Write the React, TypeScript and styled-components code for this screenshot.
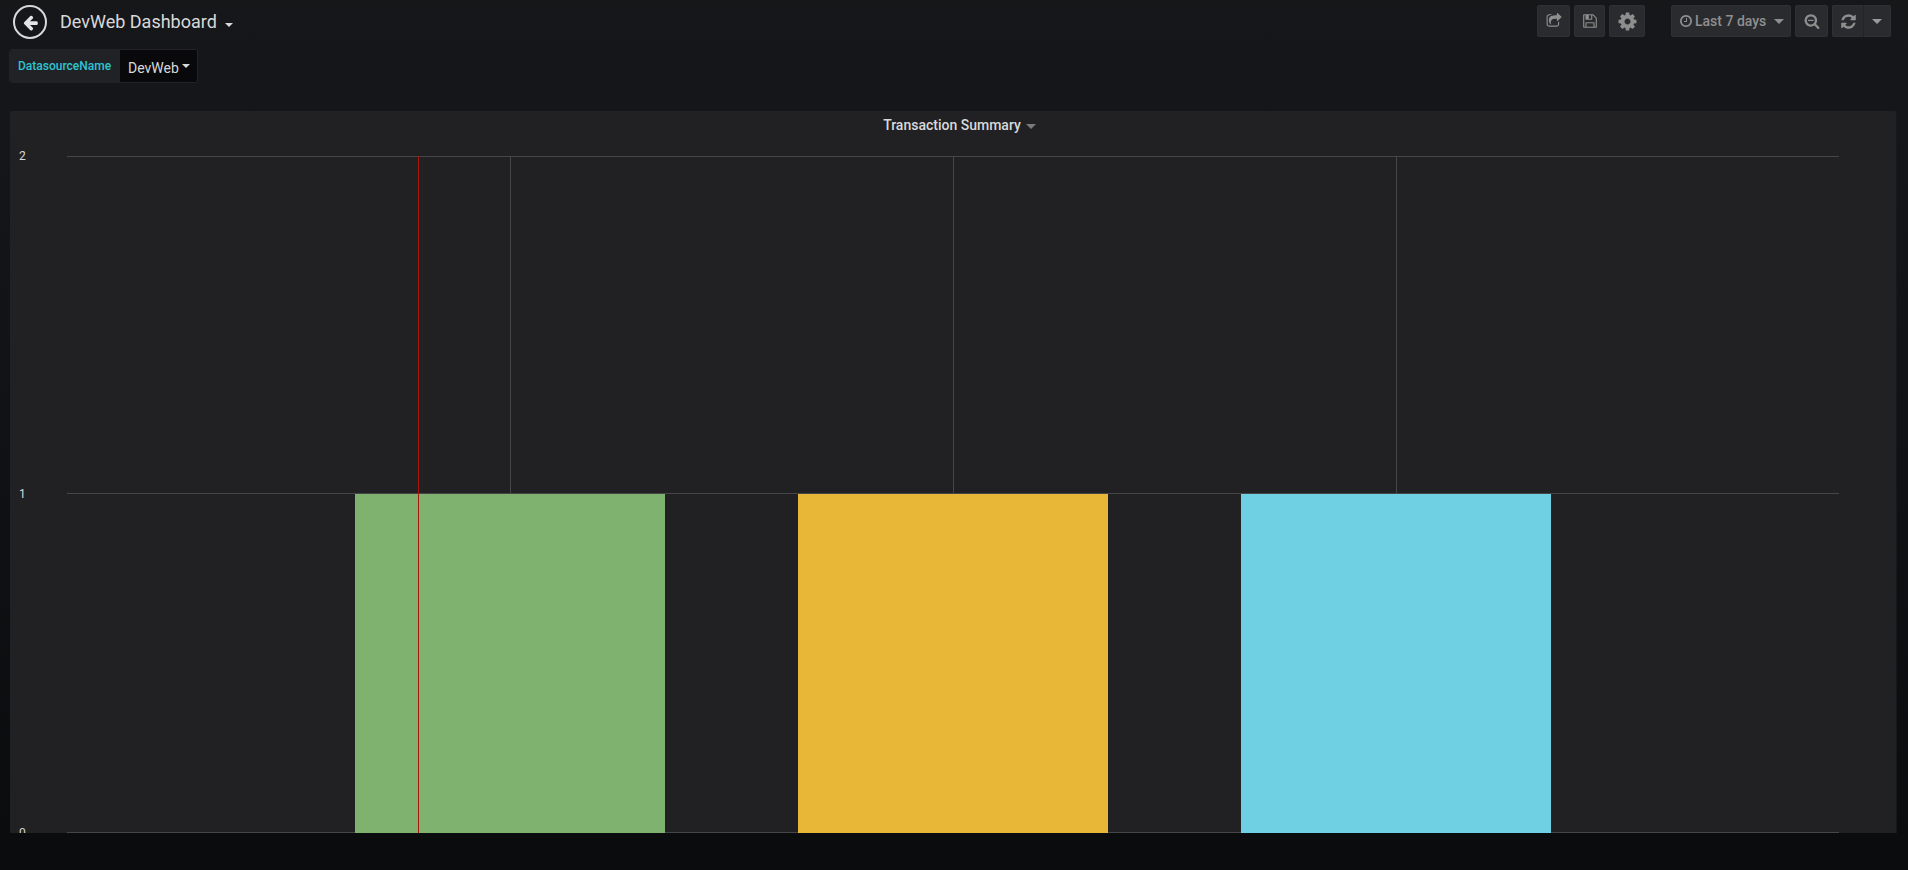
import React from "react";
import styled, { createGlobalStyle } from "styled-components";

const Global = createGlobalStyle`
  html, body { margin: 0; padding: 0; height: 100%; overflow: hidden; background: #0b0c0e; }
  body { font-family: Roboto, "Liberation Sans", sans-serif; }
`;

const ICONS = {
  back: "M1664 896v128q0 53-32.5 90.5t-84.5 37.5h-704l293 294q38 36 38 90t-38 90l-75 76q-37 37-90 37-52 0-91-37l-651-652q-37-37-37-90 0-52 37-91l651-650q38-38 91-38 52 0 90 38l75 74q38 38 38 91t-38 91l-293 293h704q52 0 84.500 37.500t32.500 90.500z",
  share: "M1472 989v259q0 119-84.500 203.500t-203.500 84.500h-832q-119 0-203.500-84.500t-84.500-203.500v-832q0-119 84.500-203.500t203.500-84.500h255q13 0 22.500 9.500t9.500 22.500q0 27-26 32-77 26-133 60-10 4-16 4h-112q-66 0-113 47t-47 113v832q0 66 47 113t113 47h832q66 0 113-47t47-113v-214q0-19 18-29 28-13 54-37 16-16 35-8 21 9 21 29zm237-496l-384 384q-18 19-45 19-12 0-25-5-39-17-39-59v-192h-160q-323 0-438 131-119 137-74 473 3 23-20 34-8 2-12 2-16 0-26-13-10-14-21-31t-39.500-68.500-49.500-99-38.500-114-17.500-122.500q0-49 3.500-91t14-90 28-88 47-81.500 68.500-74 94.500-61.500 124.500-48.500 159.500-30.500 196.500-11h160v-192q0-42 39-59 13-5 25-5 26 0 45 19l384 384q19 19 19 45t-19 45z",
  save: "M512 1536h768v-384h-768v384zm896 0h128v-896q0-14-10-38.500t-20-34.500l-281-281q-10-10-34-20t-39-10v416q0 40-28 68t-68 28h-576q-40 0-68-28t-28-68v-416h-128v1280h128v-416q0-40 28-68t68-28h832q40 0 68 28t28 68v416zm-384-928v-320q0-13-9.500-22.500t-22.500-9.500h-192q-13 0-22.500 9.500t-9.500 22.500v320q0 13 9.500 22.500t22.500 9.500h192q13 0 22.500-9.500t9.500-22.500zm640 32v928q0 40-28 68t-68 28h-1344q-40 0-68-28t-28-68v-1344q0-40 28-68t68-28h928q40 0 88 20t76 48l280 280q28 28 48 76t20 88z",
  cog: "M1152 896q0-106-75-181t-181-75-181 75-75 181 75 181 181 75 181-75 75-181zm512-109v222q0 12-8 23t-20 13l-185 28q-19 54-39 91 35 50 107 138 10 12 10 25t-9 23q-27 37-99 108t-94 71q-12 0-26-9l-138-108q-44 23-91 38-16 136-29 186-7 28-36 28h-222q-14 0-24.500-8.500t-11.500-21.500l-28-184q-49-16-90-37l-141 107q-10 9-25 9-14 0-25-11-126-114-165-168-7-10-7-23 0-12 8-23 15-21 51-66.500t54-70.500q-27-50-41-99l-183-27q-13-2-21-12.500t-8-23.500v-222q0-12 8-23t19-13l186-28q14-46 39-92-40-57-107-138-10-12-10-24 0-10 9-23 26-36 98.500-107.500t94.500-71.500q13 0 26 10l138 107q44-23 91-38 16-136 29-186 7-28 36-28h222q14 0 24.500 8.500t11.500 21.500l28 184q49 16 90 37l142-107q9-9 24-9 13 0 25 10 129 119 165 170 7 8 7 22 0 12-8 23-15 21-51 66.500t-54 70.500q26 50 41 98l183 28q13 2 21 12.500t8 23.500z",
  clock: "M1024 544v448q0 14-9 23t-23 9h-320q-14 0-23-9t-9-23v-64q0-14 9-23t23-9h224v-352q0-14 9-23t23-9h64q14 0 23 9t9 23zm416 352q0-148-73-273t-198-198-273-73-273 73-198 198-73 273 73 273 198 198 273 73 273-73 198-198 73-273zm224 0q0 209-103 385.500t-279.500 279.500-385.500 103-385.500-103-279.500-279.500-103-385.500 103-385.500 279.500-279.500 385.500-103 385.500 103 279.500 279.500 103 385.500z",
  zoom: "M1088 800v64q0 13-9.500 22.500t-22.500 9.500h-576q-13 0-22.500-9.500t-9.500-22.500v-64q0-13 9.500-22.500t22.500-9.500h576q13 0 22.500 9.500t9.500 22.500zm128 32q0-185-131.500-316.500t-316.500-131.500-316.500 131.500-131.500 316.500 131.500 316.500 316.500 131.500 316.500-131.500 131.500-316.500zm512 832q0 53-37.500 90.500t-90.500 37.500q-54 0-90-38l-343-342q-179 124-399 124-143 0-273.500-55.500t-225-150-150-225-55.500-273.500 55.500-273.500 150-225 225-150 273.500-55.500 273.500 55.500 225 150 150 225 55.500 273.500q0 220-124 399l343 343q37 37 37 90z",
  sync: "M1639 1056q0 5-1 7-64 268-268 434.500t-478 166.500q-146 0-282.500-55t-243.500-157l-129 129q-19 19-45 19t-45-19-19-45v-448q0-26 19-45t45-19h448q26 0 45 19t19 45-19 45l-137 137q71 66 161 102t187 36q134 0 250-65t186-179q11-17 53-117 8-23 30-23h192q13 0 22.500 9.500t9.500 22.500zm25-800v448q0 26-19 45t-45 19h-448q-26 0-45-19t-19-45 19-45l138-138q-148-137-349-137-134 0-250 65t-186 179q-11 17-53 117-8 23-30 23h-199q-13 0-22.500-9.500t-9.500-22.500v-7q65-268 270-434.500t480-166.500q146 0 284 55.500t245 156.500l130-129q19-19 45-19t45 19 19 45z",
};

const Glyph = styled.svg<{ $size: number }>`
  display: block;
  width: ${(p) => p.$size}px;
  height: ${(p) => p.$size}px;
  fill: currentColor;
`;

function Icon({ name, size }: { name: keyof typeof ICONS; size: number }) {
  return (
    <Glyph viewBox="0 0 1792 1792" $size={size}>
      <path d={ICONS[name]} />
    </Glyph>
  );
}

const Page = styled.div`
  width: 1908px;
  height: 870px;
  background: linear-gradient(180deg, #161719 0px, #141619 120px, #0b0c0e 830px);
  overflow: hidden;
`;

const Navbar = styled.header`
  height: 43px;
  display: flex;
  align-items: flex-start;
  justify-content: space-between;
  padding: 5px 17px 0 13px;
  box-sizing: border-box;
`;

const TitleGroup = styled.div`
  display: flex;
  align-items: center;
  height: 34px;
`;

const BackButton = styled.div`
  width: 34px;
  height: 34px;
  box-sizing: border-box;
  border: 2px solid #d8d9da;
  border-radius: 50%;
  display: flex;
  align-items: center;
  justify-content: center;
  color: #e3e4e5;
`;

const Title = styled.span`
  margin-left: 13px;
  font-size: 18px;
  color: #d8d9da;
  line-height: 34px;
`;

const Caret = styled.span<{ $size?: number; $color?: string }>`
  display: inline-block;
  width: 0;
  height: 0;
  border-left: ${(p) => p.$size ?? 4}px solid transparent;
  border-right: ${(p) => p.$size ?? 4}px solid transparent;
  border-top: ${(p) => p.$size ?? 4}px solid ${(p) => p.$color ?? "#d8d9da"};
`;

const TitleCaret = styled(Caret)`
  margin-left: 8px;
  margin-top: 5px;
`;

const Tools = styled.div`
  display: flex;
  align-items: flex-start;
`;

const ToolButton = styled.div<{ $w: number; $ml?: number }>`
  width: ${(p) => p.$w}px;
  margin-left: ${(p) => p.$ml ?? 4}px;
  height: 32px;
  box-sizing: border-box;
  background: #2a2b2e;
  border: 1px solid #2f3033;
  border-radius: 2px;
  display: flex;
  align-items: center;
  justify-content: center;
  color: #8e8e8e;
`;

const TimeButton = styled(ToolButton)`
  justify-content: flex-start;
  padding-left: 7px;
`;

const TimeLabel = styled.span`
  font-size: 14px;
  font-weight: 500;
  margin-left: 2px;
  margin-top: -1px;
  color: #8f8f8f;
`;

const TimeCaret = styled(Caret)`
  margin-left: 8px;
`;

const RefreshGroup = styled.div`
  display: flex;
  margin-left: 4px;
`;

const RefreshPart = styled(ToolButton)`
  margin-left: 0;
  border-radius: 2px 0 0 2px;
  border-right: 1px solid #232426;
`;

const RefreshCaretPart = styled(ToolButton)`
  margin-left: 0;
  border-left: 0;
  border-radius: 0 2px 2px 0;
`;

const VarRow = styled.div`
  display: flex;
  height: 34px;
  margin: 6px 0 0 9px;
  width: 189px;
  box-sizing: border-box;
  border: 1px solid #222326;
  border-radius: 3px;
  overflow: hidden;
`;

const VarLabel = styled.div`
  width: 110px;
  background: #212226;
  color: #2ec4d3;
  font-size: 12px;
  font-weight: 500;
  padding-left: 8px;
  box-sizing: border-box;
  line-height: 33px;
`;

const VarValue = styled.div`
  flex: 1;
  background: #09090b;
  color: #d8d9da;
  font-size: 14px;
  display: flex;
  align-items: center;
  padding: 3px 0 0 8px;
`;

const VarCaret = styled(Caret)`
  margin-left: 3px;
  margin-top: -3px;
`;

const Panel = styled.section`
  margin: 28px 0 0 10px;
  width: 1886px;
  height: 722px;
  background: #212124;
  border-radius: 2px 2px 0 0;
  box-shadow: 1px 0 0 #18181a;
  overflow: hidden;
`;

const PanelHeader = styled.div`
  height: 28px;
  display: flex;
  align-items: center;
  justify-content: center;
  padding-left: 13px;
  font-size: 14px;
  font-weight: 500;
  color: #d8d9da;
`;

const PanelCaret = styled(Caret)`
  margin-left: 5px;
  margin-top: 2px;
`;

const Chart = styled.svg`
  display: block;
  width: 1886px;
  height: 694px;
`;

const AxisLabel = styled.text`
  font-family: Roboto, "Liberation Sans", sans-serif;
  font-size: 12px;
  fill: #d8d9da;
`;

const GRID = "#464648";
const X0 = 57;
const X1 = 1829;
const Y2 = 17;
const Y1 = 355;
const Y0 = 694;

const bars = [
  { x: 345, w: 310, c: "#7fb26e" },
  { x: 788, w: 310, c: "#e8b738" },
  { x: 1231, w: 310, c: "#70d0e3" },
];

export default function App() {
  return (
    <Page>
      <Global />
      <Navbar>
        <TitleGroup>
          <BackButton>
            <Icon name="back" size={17} />
          </BackButton>
          <Title>DevWeb Dashboard</Title>
          <TitleCaret $size={4} />
        </TitleGroup>
        <Tools>
          <ToolButton $w={33}><Icon name="share" size={16} /></ToolButton>
          <ToolButton $w={31}><Icon name="save" size={16} /></ToolButton>
          <ToolButton $w={36}><Icon name="cog" size={21} /></ToolButton>
          <TimeButton $w={120} $ml={26}>
            <Icon name="clock" size={14} />
            <TimeLabel>Last 7 days</TimeLabel>
            <TimeCaret $size={5} $color="#8e8e8e" />
          </TimeButton>
          <ToolButton $w={33}><Icon name="zoom" size={16} /></ToolButton>
          <RefreshGroup>
            <RefreshPart $w={32}><Icon name="sync" size={17} /></RefreshPart>
            <RefreshCaretPart $w={27}><Caret $size={5} $color="#9a9a9a" /></RefreshCaretPart>
          </RefreshGroup>
        </Tools>
      </Navbar>
      <VarRow>
        <VarLabel>DatasourceName</VarLabel>
        <VarValue>
          DevWeb
          <VarCaret $size={4} />
        </VarValue>
      </VarRow>
      <Panel>
        <PanelHeader>
          Transaction Summary
          <PanelCaret $size={5} $color="#7b7b7e" />
        </PanelHeader>
        <Chart viewBox="0 0 1886 694">
          <line x1={X0} x2={X1} y1={Y2 + 0.5} y2={Y2 + 0.5} stroke={GRID} />
          <line x1={X0} x2={X1} y1={Y1 - 0.5} y2={Y1 - 0.5} stroke={GRID} />
          <line x1={X0} x2={X1} y1={Y0 - 0.5} y2={Y0 - 0.5} stroke={GRID} />
          {[500, 943, 1386].map((x) => (
            <line key={x} x1={x + 0.5} x2={x + 0.5} y1={Y2} y2={Y1} stroke={GRID} />
          ))}
          {bars.map((b) => (
            <rect key={b.x} x={b.x} y={Y1} width={b.w} height={Y0 - Y1} fill={b.c} />
          ))}
          <line x1={408.5} x2={408.5} y1={Y2} y2={Y0} stroke="#a8160e" />
          <AxisLabel x={9} y={Y2 + 4}>2</AxisLabel>
          <AxisLabel x={9} y={Y1 + 4}>1</AxisLabel>
          <AxisLabel x={9} y={Y0 + 4}>0</AxisLabel>
        </Chart>
      </Panel>
    </Page>
  );
}
